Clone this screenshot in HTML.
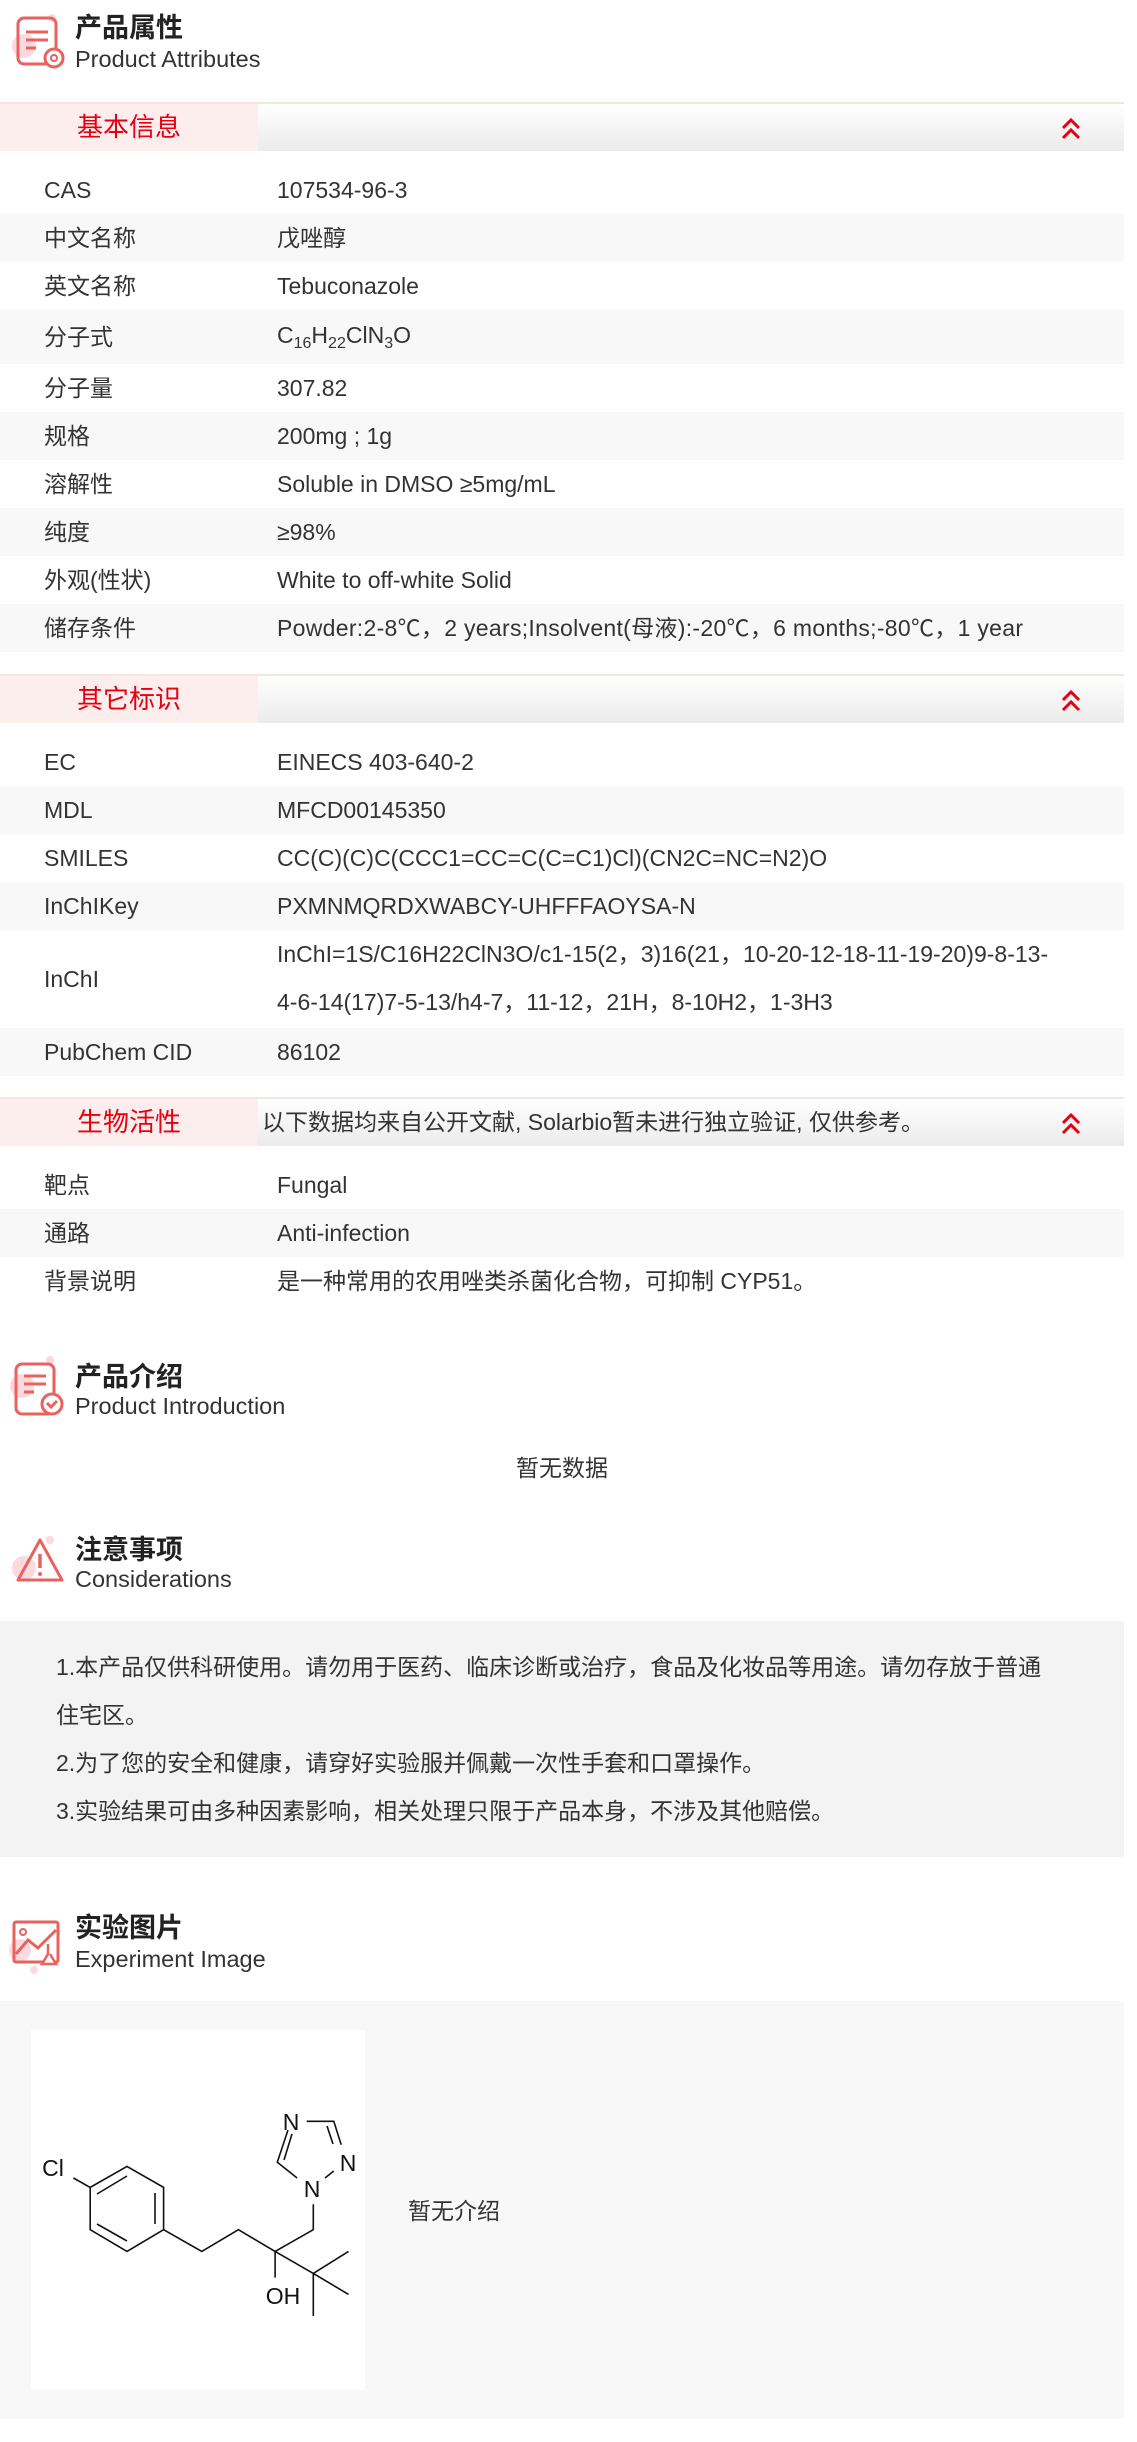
<!DOCTYPE html>
<html><head><meta charset="utf-8"><style>
*{margin:0;padding:0;box-sizing:border-box}
body{width:1137px;height:2442px;background:#fff;font-family:"Liberation Sans","Noto Sans CJK SC",sans-serif;color:#333;position:relative;overflow:hidden}
.abs{position:absolute}
.tt{position:absolute;left:75px;font-size:27px;font-weight:bold;color:#222;line-height:32px}
.ts{position:absolute;left:75px;font-size:23.5px;color:#333;line-height:26px}
.bar{position:absolute;left:0;width:1124px;height:49px;border-top:2px solid #f6e6e2;background:linear-gradient(#fff,#ebebeb)}
.bar .l{position:absolute;left:0;top:0;width:258px;height:47px;background:#fdeeee;color:#e60012;font-size:26px;line-height:47px;text-align:center}
.bar svg{position:absolute;left:1061px;top:14px}
.row{position:absolute;left:0;width:1124px;height:48px;font-size:23px;line-height:48px}
.row.g{background:#f8f8f8}
.row .k{position:absolute;left:44px}
.row .v{position:absolute;left:277px}
sub{font-size:16px;vertical-align:-5px;line-height:0}
</style></head><body>

<svg class="abs" style="left:12px;top:12px" width="56" height="60" viewBox="0 0 56 60"><circle cx="12" cy="34" r="12" fill="#fbd9de"/><circle cx="40" cy="6" r="4" fill="#fbd9de"/><rect x="6" y="6" width="38" height="46" rx="6" fill="none" stroke="#e8625e" stroke-width="3"/><path d="M14 20h22M14 28h22M14 36h10" stroke="#e8625e" stroke-width="3"/><circle cx="42" cy="46" r="9" fill="#fff" stroke="#e8625e" stroke-width="3"/><circle cx="42" cy="46" r="3" fill="none" stroke="#e8625e" stroke-width="2"/></svg>
<div class="tt" style="top:12px">产品属性</div>
<div class="ts" style="top:46px">Product Attributes</div>

<div class="bar" style="top:102px"><div class="l">基本信息</div><svg width="20" height="22" viewBox="0 0 20 22"><path d="M2 10l8-8 8 8M2 20l8-8 8 8" fill="none" stroke="#e60012" stroke-width="3"/></svg></div>
<div class="row" style="top:166px"><span class="k">CAS</span><span class="v">107534-96-3</span></div>
<div class="row g" style="top:214px"><span class="k">中文名称</span><span class="v">戊唑醇</span></div>
<div class="row" style="top:262px"><span class="k">英文名称</span><span class="v">Tebuconazole</span></div>
<div class="row g" style="top:310px;height:54px;line-height:50px"><span class="k" style="line-height:54px">分子式</span><span class="v">C<sub>16</sub>H<sub>22</sub>ClN<sub>3</sub>O</span></div>
<div class="row" style="top:364px"><span class="k">分子量</span><span class="v">307.82</span></div>
<div class="row g" style="top:412px"><span class="k">规格</span><span class="v">200mg ; 1g</span></div>
<div class="row" style="top:460px"><span class="k">溶解性</span><span class="v">Soluble in DMSO ≥5mg/mL</span></div>
<div class="row g" style="top:508px"><span class="k">纯度</span><span class="v">≥98%</span></div>
<div class="row" style="top:556px"><span class="k">外观(性状)</span><span class="v">White to off-white Solid</span></div>
<div class="row g" style="top:604px"><span class="k">储存条件</span><span class="v" style="white-space:nowrap;letter-spacing:0.3px">Powder:2-8℃，2 years;Insolvent(母液):-20℃，6 months;-80℃，1 year</span></div>

<div class="bar" style="top:674px"><div class="l">其它标识</div><svg width="20" height="22" viewBox="0 0 20 22"><path d="M2 10l8-8 8 8M2 20l8-8 8 8" fill="none" stroke="#e60012" stroke-width="3"/></svg></div>
<div class="row" style="top:738px"><span class="k">EC</span><span class="v">EINECS 403-640-2</span></div>
<div class="row g" style="top:786px"><span class="k">MDL</span><span class="v">MFCD00145350</span></div>
<div class="row" style="top:834px"><span class="k">SMILES</span><span class="v">CC(C)(C)C(CCC1=CC=C(C=C1)Cl)(CN2C=NC=N2)O</span></div>
<div class="row g" style="top:882px"><span class="k">InChIKey</span><span class="v">PXMNMQRDXWABCY-UHFFFAOYSA-N</span></div>
<div class="row" style="top:930px;height:98px"><span class="k" style="line-height:98px">InChI</span><span class="v" style="width:790px">InChI=1S/C16H22ClN3O/c1-15(2，3)16(21，10-20-12-18-11-19-20)9-8-13-4-6-14(17)7-5-13/h4-7，11-12，21H，8-10H2，1-3H3</span></div>
<div class="row g" style="top:1028px"><span class="k">PubChem CID</span><span class="v">86102</span></div>

<div class="bar" style="top:1097px"><div class="l">生物活性</div><div class="abs" style="left:262px;top:0;font-size:23px;line-height:47px;color:#333">以下数据均来自公开文献, Solarbio暂未进行独立验证, 仅供参考。</div><svg width="20" height="22" viewBox="0 0 20 22"><path d="M2 10l8-8 8 8M2 20l8-8 8 8" fill="none" stroke="#e60012" stroke-width="3"/></svg></div>
<div class="row" style="top:1161px"><span class="k">靶点</span><span class="v">Fungal</span></div>
<div class="row g" style="top:1209px"><span class="k">通路</span><span class="v">Anti-infection</span></div>
<div class="row" style="top:1257px"><span class="k">背景说明</span><span class="v">是一种常用的农用唑类杀菌化合物，可抑制 CYP51。</span></div>

<svg class="abs" style="left:10px;top:1354px" width="56" height="64" viewBox="0 0 56 64"><circle cx="12" cy="32" r="12" fill="#fbd9de"/><circle cx="40" cy="6" r="4" fill="#fbd9de"/><rect x="6" y="10" width="38" height="50" rx="6" fill="none" stroke="#e8625e" stroke-width="3"/><path d="M14 22h22M14 30h22M14 38h10" stroke="#e8625e" stroke-width="3"/><circle cx="42" cy="50" r="10" fill="#fff" stroke="#e8625e" stroke-width="3"/><path d="M37 49l4 4 6-6" fill="none" stroke="#e8625e" stroke-width="3"/></svg>
<div class="tt" style="top:1361px">产品介绍</div>
<div class="ts" style="top:1393px">Product Introduction</div>
<div class="abs" style="left:0;width:1124px;top:1449px;text-align:center;font-size:23px">暂无数据</div>

<svg class="abs" style="left:10px;top:1532px" width="56" height="56" viewBox="0 0 56 56"><circle cx="14" cy="36" r="12" fill="#fbd9de"/><circle cx="40" cy="8" r="4" fill="#fbd9de"/><path d="M30 8L52 48H8Z" fill="none" stroke="#e8625e" stroke-width="3" stroke-linejoin="round"/><path d="M30 22v14" stroke="#e8625e" stroke-width="3.5"/><circle cx="30" cy="42" r="2" fill="#e8625e"/></svg>
<div class="tt" style="top:1534px">注意事项</div>
<div class="ts" style="top:1566px">Considerations</div>
<div class="abs" style="left:0;top:1621px;width:1124px;height:236px;background:#f3f3f3;font-size:23px;line-height:48px;padding:22px 80px 0 56px">1.本产品仅供科研使用。请勿用于医药、临床诊断或治疗，食品及化妆品等用途。请勿存放于普通住宅区。<br>2.为了您的安全和健康，请穿好实验服并佩戴一次性手套和口罩操作。<br>3.实验结果可由多种因素影响，相关处理只限于产品本身，不涉及其他赔偿。</div>

<svg class="abs" style="left:8px;top:1914px" width="56" height="62" viewBox="0 0 56 62"><circle cx="12" cy="36" r="11" fill="#fbd9de"/><circle cx="26" cy="56" r="4" fill="#fbd9de"/><rect x="6" y="8" width="44" height="40" rx="2" fill="none" stroke="#e8625e" stroke-width="3"/><circle cx="15" cy="18" r="3" fill="none" stroke="#e8625e" stroke-width="2"/><path d="M8 40l12-14 10 8 18-18" fill="none" stroke="#e8625e" stroke-width="3"/><path d="M40 30v10l-6 10h14l-6-10" fill="#fff" stroke="#e8625e" stroke-width="2.5"/></svg>
<div class="tt" style="top:1912px">实验图片</div>
<div class="ts" style="top:1946px">Experiment Image</div>
<div class="abs" style="left:0;top:2001px;width:1124px;height:418px;background:#f8f8f8"></div>
<svg class="abs" style="left:31px;top:2030px;background:#fff" width="334" height="360" viewBox="0 0 334 360">
<g fill="none" stroke="#111" stroke-width="1.6">
<path d="M96 136.4L132.6 157.4L132.6 199.7L96 221.4L59.2 199.7L59.2 157.4Z"/>
<path d="M124 163L124 194M96 146L66 164M96 211L66 194"/>
<path d="M42.4 148L59.2 157.4"/>
<path d="M132.6 199.7L170.8 221.4L207.4 199.7L244.1 221.4L282.3 199.7L282.3 174.2"/>
<path d="M244.1 221.4L244.1 247.6"/>
<path d="M244.1 221.4L282.3 243.4L317.5 221.4M282.3 243.4L317.5 264.4M282.3 243.4L282.3 286"/>
<path d="M266.1 148L246.3 132.2L257 100M253 130L261 104"/>
<path d="M275.7 91.3L302.8 91.3L310.2 114.8M296 96L302 114"/>
<path d="M302.8 141L294 148"/>
</g>
<g font-family="Liberation Sans,sans-serif" font-size="23" fill="#111" text-anchor="middle">
<text x="22" y="146">Cl</text>
<text x="260" y="100">N</text>
<text x="317" y="141">N</text>
<text x="281" y="167">N</text>
<text x="252" y="274">OH</text>
</g>
</svg>
<div class="abs" style="left:408px;top:2196px;font-size:23px;line-height:30px">暂无介绍</div>
</body></html>
